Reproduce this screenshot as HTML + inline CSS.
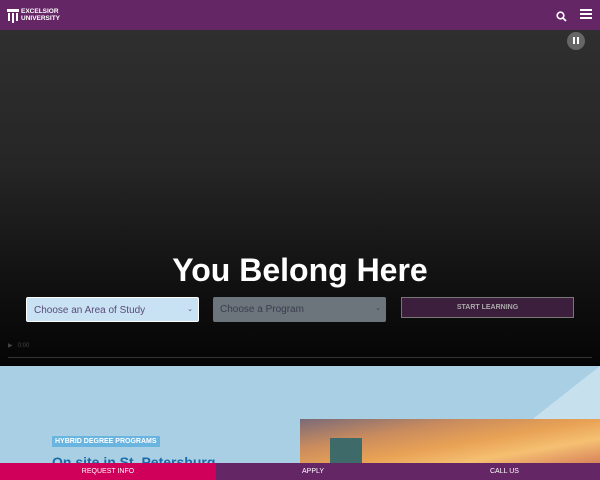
<!DOCTYPE html>
<html><head><style>
*{margin:0;padding:0;box-sizing:border-box}
body{width:600px;height:480px;overflow:hidden;font-family:"Liberation Sans",sans-serif;position:relative;background:#a8cfe3}
.hdr{position:absolute;left:0;top:0;width:600px;height:30px;background:#652665}
.vid{position:absolute;left:0;top:30px;width:600px;height:335px;background:linear-gradient(#2f2f2f 0%,#262626 40%,#111 75%,#050505 100%)}
.abs{position:absolute}
.sel{position:absolute;top:297px;height:25px;width:173px;border-radius:2px;font-size:10px;padding:7px 7px;color:#5a4a7a}
.bar{position:absolute;top:463px;height:17px;font-size:7px;color:#fff;text-align:center;line-height:17px}
</style></head><body>
<div class="hdr">
 <svg class="abs" style="left:7px;top:9px" width="12" height="14" viewBox="0 0 12 14"><rect x="0" y="0" width="12" height="3" fill="#fff"/><rect x="1" y="4" width="2" height="8" fill="#fff"/><rect x="5" y="4" width="2" height="10" fill="#fff"/><rect x="9" y="4" width="2" height="8" fill="#fff"/></svg>
 <div class="abs" style="left:21px;top:9px;color:#fff;font-size:6.5px;font-weight:bold;line-height:6.5px">EXCELSIOR<br>UNIVERSITY</div>
 <svg class="abs" style="left:556px;top:11px" width="11" height="11" viewBox="0 0 11 11"><circle cx="4.5" cy="4.5" r="3.3" fill="none" stroke="#fff" stroke-width="1.6"/><line x1="7" y1="7" x2="10" y2="10" stroke="#fff" stroke-width="1.8"/></svg>
 <div class="abs" style="left:580px;top:9px;width:12px;height:2px;background:#fff;box-shadow:0 4px #fff,0 8px #fff"></div>
</div>
<div class="vid"></div>
<div class="abs" style="left:567px;top:32px;width:18px;height:18px;border-radius:50%;background:#666"><div class="abs" style="left:6px;top:5px;width:2px;height:7px;background:#fff"></div><div class="abs" style="left:10px;top:5px;width:2px;height:7px;background:#fff"></div></div>
<div class="abs" style="left:0;top:252px;width:600px;text-align:center;color:#fff;font-size:32px;font-weight:bold">You Belong Here</div>
<div class="sel" style="left:26px;background:#c8e2f3;border:1px solid #fff">Choose an Area of Study<span class="abs" style="right:5px;top:7px;font-size:7px">⌄</span></div>
<div class="sel" style="left:213px;background:#6b757b;color:#3c3c50">Choose a Program<span class="abs" style="right:5px;top:7px;font-size:7px">⌄</span></div>
<div class="abs" style="left:401px;top:297px;width:173px;height:21px;background:#3c1f3c;border:1px solid #777;color:#aaa;font-size:7px;font-weight:bold;text-align:center;line-height:19px">START LEARNING</div>
<div class="abs" style="left:8px;top:342px;color:#444;font-size:6px">▶ &nbsp; 0:00</div>
<div class="abs" style="left:8px;top:357px;width:584px;height:1px;background:#333"></div>
<div class="abs" style="left:0;top:365px;width:600px;height:1px;background:#000"></div>
<svg class="abs" style="left:0;top:366px" width="600" height="97"><polygon points="530,55 600,0 600,55" fill="#c7e0ee"/></svg>
<div class="abs" style="left:300px;top:419px;width:300px;height:44px;background:linear-gradient(170deg,#7a6a78 0%,#c98b5e 30%,#e9a255 55%,#f5c072 75%,#d8825a 100%)"></div>
<div class="abs" style="left:330px;top:438px;width:32px;height:25px;background:#3f6a6a"></div>
<div class="abs" style="left:52px;top:436px;width:108px;height:11px;background:#6ab4e0;color:#fff;font-size:7px;font-weight:bold;line-height:11px;padding-left:3px">HYBRID DEGREE PROGRAMS</div>
<div class="abs" style="left:52px;top:454px;color:#1b6ba8;font-size:14px;font-weight:bold">On site in St. Petersburg</div>
<div class="bar" style="left:0;width:216px;background:#d0005a">REQUEST INFO</div>
<div class="bar" style="left:216px;width:384px;background:#652665"><span class="abs" style="left:86px">APPLY</span><span class="abs" style="left:274px">CALL US</span></div>
</body></html>
